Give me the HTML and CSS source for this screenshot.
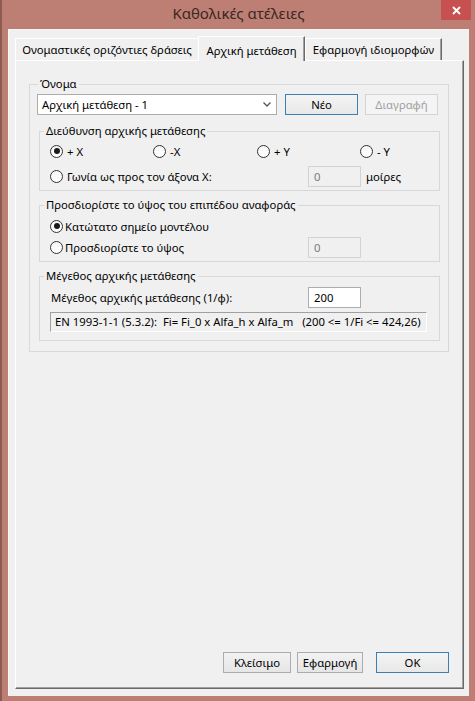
FILE: index.html
```html
<!DOCTYPE html>
<html lang="el">

<head>
    <meta charset="UTF-8">
    <meta name="viewport" content="width=device-width, initial-scale=1.0">
    <title>Καθολικές ατέλειες</title>
    <link rel="stylesheet" href="styles.css">
</head>

<body>
    <div class="window">
        <div class="titlebar">
            <span class="title">Καθολικές ατέλειες</span>
            <span class="close">
                <svg width="9" height="9" viewBox="0 0 9 9">
                    <path d="M1 1L8 8M8 1L1 8" stroke="#fff" stroke-width="1.8" fill="none" />
                </svg>
            </span>
        </div>

        <div class="client">
            <div class="tabs">
                <div class="tab tab1">Ονομαστικές οριζόντιες δράσεις</div>
                <div class="tab tab2 active">Αρχική μετάθεση</div>
                <div class="tab tab3">Εφαρμογή ιδιομορφών</div>
            </div>

            <div class="panel">
                <fieldset class="group outer">
                    <legend>Όνομα</legend>
                    <div class="namerow">
                        <div class="combo">
                            <span>Αρχική μετάθεση - 1</span>
                            <svg width="8" height="5" viewBox="0 0 8 5">
                                <path d="M0.5 0.5L4 4L7.5 0.5" stroke="#555" stroke-width="1.3" fill="none" />
                            </svg>
                        </div>
                        <button class="btn default">Νέο</button>
                        <button class="btn" disabled>Διαγραφή</button>
                    </div>

                    <fieldset class="group inner g1">
                        <legend>Διεύθυνση αρχικής μετάθεσης</legend>
                        <div class="dirrow">
                            <label class="radio on"><i></i>+ X</label>
                            <label class="radio"><i></i>-X</label>
                            <label class="radio"><i></i>+ Y</label>
                            <label class="radio"><i></i>- Y</label>
                        </div>
                        <div class="fieldrow">
                            <label class="radio"><i></i>Γωνία ως προς τον άξονα X:</label>
                            <div class="box off">0</div>
                            <span class="unit">μοίρες</span>
                        </div>
                    </fieldset>

                    <fieldset class="group inner g2">
                        <legend>Προσδιορίστε το ύψος του επιπέδου αναφοράς</legend>
                        <div class="radiorow">
                            <label class="radio on tight"><i></i>Κατώτατο σημείο μοντέλου</label>
                        </div>
                        <div class="fieldrow short">
                            <label class="radio tight"><i></i>Προσδιορίστε το ύψος</label>
                            <div class="box off">0</div>
                        </div>
                    </fieldset>

                    <fieldset class="group inner g3">
                        <legend>Μέγεθος αρχικής μετάθεσης</legend>
                        <div class="fieldrow short plain">
                            <span>Μέγεθος αρχικής μετάθεσης (1/φ):</span>
                            <div class="box">200</div>
                        </div>
                        <div class="info">EN 1993-1-1 (5.3.2):  Fi= Fi_0 x Alfa_h x Alfa_m   (200 &lt;= 1/Fi &lt;= 424,26)</div>
                    </fieldset>
                </fieldset>

                <div class="footer">
                    <button class="btn b-close">Κλείσιμο</button>
                    <button class="btn b-apply">Εφαρμογή</button>
                    <button class="btn b-ok default">OK</button>
                </div>
            </div>
        </div>
    </div>
</body>

</html>
```

FILE: styles.css
```css
* {
    margin: 0;
    padding: 0;
    box-sizing: border-box;
}

body {
    font-family: "Noto Sans", "Liberation Sans", sans-serif;
    font-size: 11.3px;
    color: #000;
    background-color: #bd7f73;
}

.window {
    position: relative;
    width: 475px;
    height: 701px;
    display: flex;
    flex-direction: column;
    background-color: #bd7f73;
    border-left: 2px solid #8d5b51;
    padding: 0 6px 5px 6px;
}

.titlebar {
    height: 29px;
    display: flex;
    justify-content: center;
    align-items: center;
    padding-bottom: 3px;
}

.title {
    font-size: 15px;
    color: #3b2723;
}

.close {
    position: absolute;
    top: 0;
    right: 4px;
    width: 30px;
    height: 20px;
    display: flex;
    justify-content: center;
    align-items: center;
    background-color: #c75050;
}

.client {
    flex: 1;
    display: flex;
    flex-direction: column;
    background-color: #f0f0f0;
    border-top: 1px solid #f7f3f2;
    border-left: 1px solid #fbf8f8;
    padding: 8px 5px 7px 6px;
}

/* tabs */
.tabs {
    height: 22px;
    display: flex;
}

.tab {
    height: 22px;
    display: flex;
    justify-content: center;
    align-items: center;
    white-space: nowrap;
    background-color: #f0f0f0;
    border-top: 1px solid #fff;
    border-left: 1px solid #fff;
    border-right: 1px solid #696969;
    box-shadow: inset -1px 0 #a0a0a0;
}

.tab1 {
    width: 183px;
    border-right: none;
    box-shadow: none;
}

.tab2 {
    width: 107px;
}

.tab3 {
    width: 137px;
}

.tab.active {
    position: relative;
    z-index: 1;
    height: 25px;
    margin-top: -2px;
    padding-top: 2px;
}

.panel {
    flex: 1;
    display: flex;
    flex-direction: column;
    background-color: #f0f0f0;
    border-top: 1px solid #fff;
    border-left: 1px solid #fff;
    border-right: 1px solid #696969;
    border-bottom: 1px solid #696969;
    box-shadow: inset -1px -1px #a0a0a0;
    padding: 16px 14px 15px 13px;
}

/* group boxes */
.group {
    min-width: 0;
    border: 1px solid #d8d8d8;
    padding: 0;
}

.group legend {
    line-height: 14px;
    padding: 0 2px;
}

.outer {
    padding-bottom: 10px;
}

.outer > legend {
    margin-left: 8px;
}

.inner {
    margin: 0 8px 0 9px;
}

.inner legend {
    margin-left: 4px;
}

.g1 {
    margin-top: 9px;
    padding-bottom: 3px;
}

.g2 {
    margin-top: 7px;
    padding-bottom: 4px;
}

.g3 {
    margin-top: 7px;
    padding-bottom: 8px;
}

.namerow {
    display: flex;
    gap: 8px;
    margin: 3px 10px 0 7px;
}

.namerow .btn + .btn {
    margin-left: -1px;
}

.combo {
    width: 240px;
    height: 21px;
    display: flex;
    justify-content: space-between;
    align-items: center;
    background-color: #fff;
    border: 1px solid #acacac;
    padding: 0 5px 0 4px;
}

.btn {
    width: 73px;
    height: 21px;
    font-family: inherit;
    font-size: 11.3px;
    color: #000;
    border: 1px solid #acacac;
    background: linear-gradient(#f2f2f2, #e6e6e6);
}

.btn.default {
    border-color: #3c7fb1;
    background: linear-gradient(#f4f4f4, #e8e8e8);
}

.btn:disabled {
    color: #a0a0a0;
    border-color: #d4d4d4;
    background: #f4f4f4;
}

/* radios and fields */
.radio {
    display: flex;
    align-items: center;
    gap: 4px;
    white-space: nowrap;
}

.radio.tight {
    gap: 2px;
}

.radio i {
    position: relative;
    width: 13px;
    height: 13px;
    border: 1px solid #333;
    border-radius: 50%;
    background: linear-gradient(#f6f6f6, #fff);
}

.radio.on i::after {
    content: "";
    position: absolute;
    top: 2.5px;
    left: 2.5px;
    width: 6px;
    height: 6px;
    border-radius: 50%;
    background-color: #1a1a1a;
}

.dirrow {
    height: 18px;
    display: grid;
    grid-template-columns: 103px 104px 103px auto;
    align-items: center;
    margin: 4px 0 0 10px;
}

.radiorow {
    height: 18px;
    display: flex;
    align-items: center;
    margin: 5px 0 0 10px;
}

.fieldrow {
    height: 21px;
    display: grid;
    grid-template-columns: 258px 53px auto;
    align-items: center;
    margin: 6px 0 0 10px;
}

.g2 .fieldrow {
    margin-top: 2px;
}

.g3 .fieldrow {
    margin: 4px 0 0 11px;
    grid-template-columns: 257px 53px;
}

.fieldrow.short {
    height: 20px;
}

.box {
    height: 100%;
    line-height: 19px;
    background-color: #fff;
    border: 1px solid #abadb3;
    padding-left: 5px;
}

.box.off {
    color: #7a7a7a;
    background-color: #f0f0f0;
    border-color: #d3d3d3;
}

.unit {
    margin-left: 5px;
}

.info {
    width: 377px;
    height: 20px;
    line-height: 18px;
    margin: 5px 0 0 10px;
    padding-left: 4px;
    white-space: pre;
    border-top: 1px solid #a0a0a0;
    border-left: 1px solid #a0a0a0;
    border-right: 1px solid #fff;
    border-bottom: 1px solid #fff;
}

.footer {
    margin-top: auto;
    display: flex;
    justify-content: flex-end;
    gap: 6px;
}

.b-close {
    width: 68px;
}

.b-apply {
    width: 66px;
    margin-right: 7px;
}
```
